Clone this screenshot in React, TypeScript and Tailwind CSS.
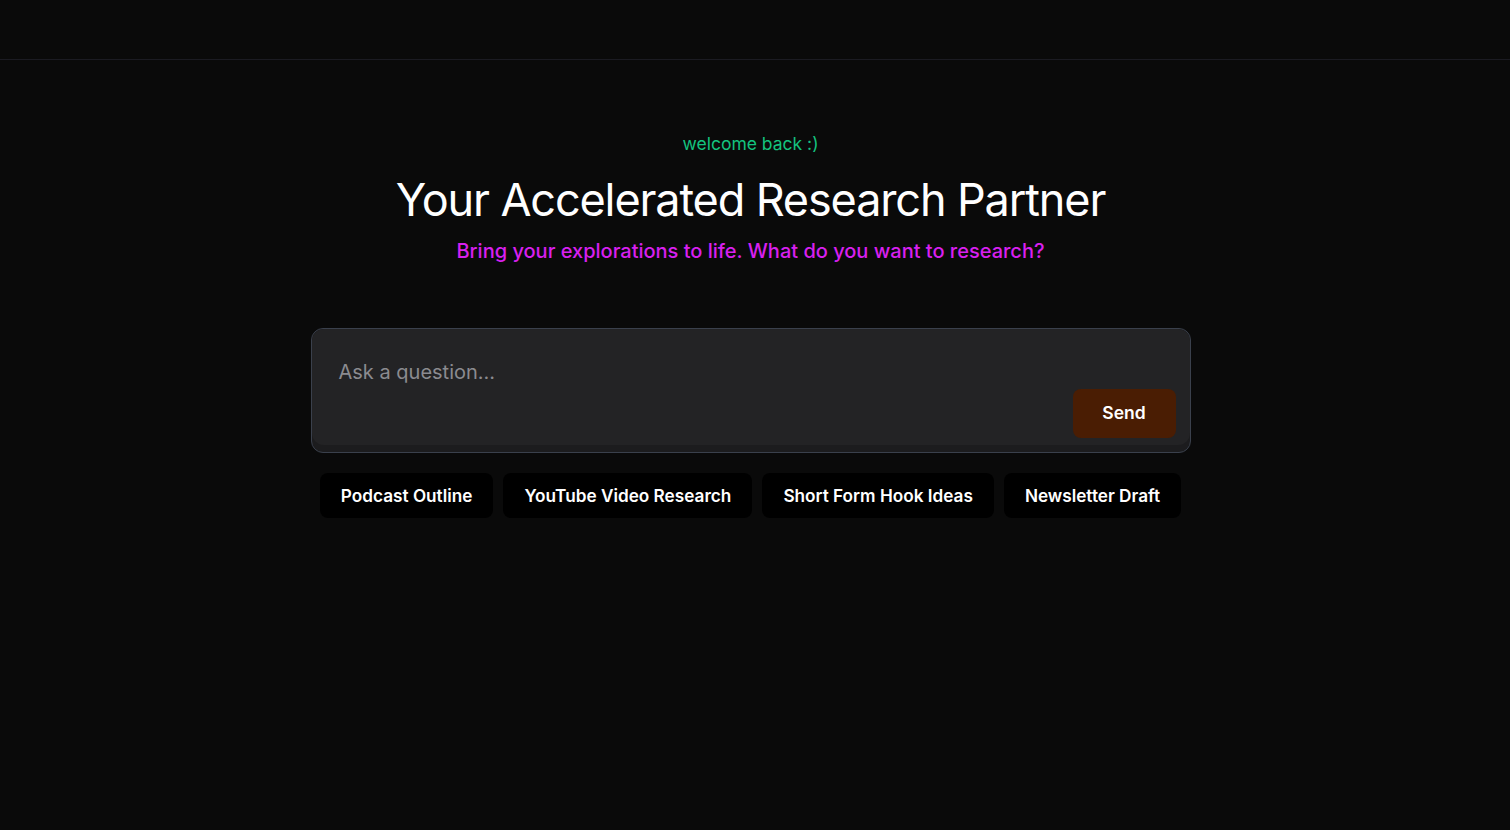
import React from "react";

export default function App() {
  const chips = ["Podcast Outline", "YouTube Video Research", "Short Form Hook Ideas", "Newsletter Draft"];
  return (
    <div className="min-h-[830px] w-full bg-[#0a0a0a] text-white" style={{ fontFamily: "Inter, 'Noto Sans', sans-serif" }}>
      <header className="h-[60px] border-b border-[#1b1b22]" />
      <main className="flex flex-col items-center pt-[72px] pr-[9px]">
        <p className="text-[17.5px] leading-6 text-[#14c27f]">welcome back :)</p>
        <h1 className="mt-[21px] text-[45px] leading-[45px] font-normal tracking-tight text-white">
          Your Accelerated Research Partner
        </h1>
        <p className="mt-[15px] text-xl leading-7 font-medium text-[#d820ef]">
          Bring your explorations to life. What do you want to research?
        </p>
        <div className="mt-[63px] w-[880px] rounded-xl border border-[#3a404c] bg-[#1c1c1e] pb-[7px]">
          <div className="flex h-[116px] flex-col justify-between rounded-xl bg-[#232325] pl-[27px] pr-[14px] pt-[29px] pb-[7px]">
            <p className="text-xl leading-7 text-[#8b8b90]">Ask a question...</p>
            <button className="self-end h-[49px] w-[103px] rounded-lg bg-[#4a1d03] text-[17.5px] font-semibold text-white">
              Send
            </button>
          </div>
        </div>
        <div className="mt-[20px] flex justify-center gap-[10px]">
          {chips.map((c) => (
            <button key={c} className="h-[45px] rounded-lg bg-black px-[21px] text-[17.2px] font-semibold text-white">
              {c}
            </button>
          ))}
        </div>
      </main>
    </div>
  );
}
